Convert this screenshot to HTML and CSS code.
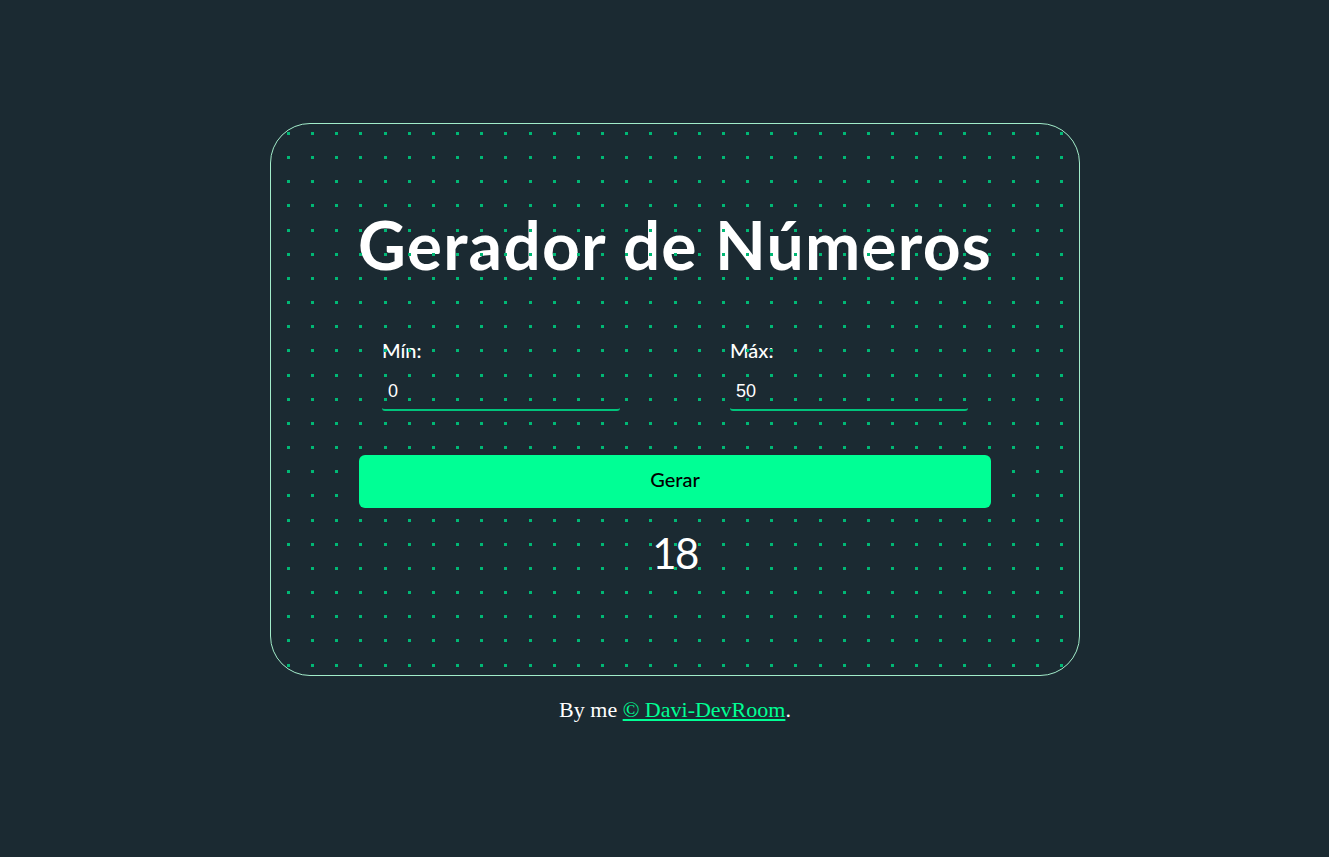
FILE: index.html
```html
<!DOCTYPE html>
<html lang="pt-BR">
<head>
<meta charset="utf-8">
<title>Gerador de Números</title>
<link rel="stylesheet" href="styles.css">
</head>
<body>
<div class="page">
  <main class="card">
    <h1 class="title">Gerador de Números</h1>
    <div class="fields">
      <div class="field">
        <label class="label" for="min">Mín:</label>
        <input class="input" id="min" type="number" value="0">
      </div>
      <div class="field">
        <label class="label" for="max">Máx:</label>
        <input class="input" id="max" type="number" value="50">
      </div>
    </div>
    <button class="btn" type="button">Gerar</button>
    <div class="result">18</div>
    <div class="dots" aria-hidden="true">
      <svg class="dots-svg" width="808" height="551" viewBox="0 0 808 551" shape-rendering="crispEdges">
        <defs>
          <g id="dotrow" fill="#00b875" transform="translate(-1 -1)">
            <rect x="17" width="3" height="3"/><rect x="41" width="3" height="3"/><rect x="65" width="3" height="3"/><rect x="89" width="3" height="3"/><rect x="114" width="3" height="3"/><rect x="138" width="3" height="3"/><rect x="162" width="3" height="3"/><rect x="186" width="3" height="3"/><rect x="210" width="3" height="3"/><rect x="234" width="3" height="3"/><rect x="259" width="3" height="3"/><rect x="283" width="3" height="3"/><rect x="307" width="3" height="3"/><rect x="331" width="3" height="3"/><rect x="355" width="3" height="3"/><rect x="379" width="3" height="3"/><rect x="404" width="3" height="3"/><rect x="428" width="3" height="3"/><rect x="452" width="3" height="3"/><rect x="476" width="3" height="3"/><rect x="500" width="3" height="3"/><rect x="524" width="3" height="3"/><rect x="549" width="3" height="3"/><rect x="573" width="3" height="3"/><rect x="597" width="3" height="3"/><rect x="621" width="3" height="3"/><rect x="645" width="3" height="3"/><rect x="669" width="3" height="3"/><rect x="693" width="3" height="3"/><rect x="718" width="3" height="3"/><rect x="742" width="3" height="3"/><rect x="766" width="3" height="3"/><rect x="790" width="3" height="3"/>
          </g>
        </defs>
        <use href="#dotrow" y="9"/><use href="#dotrow" y="33"/><use href="#dotrow" y="57"/><use href="#dotrow" y="81"/><use href="#dotrow" y="106"/><use href="#dotrow" y="130"/><use href="#dotrow" y="154"/><use href="#dotrow" y="178"/><use href="#dotrow" y="202"/><use href="#dotrow" y="226"/><use href="#dotrow" y="251"/><use href="#dotrow" y="275"/><use href="#dotrow" y="299"/><use href="#dotrow" y="323"/><use href="#dotrow" y="347"/><use href="#dotrow" y="371"/><use href="#dotrow" y="396"/><use href="#dotrow" y="420"/><use href="#dotrow" y="444"/><use href="#dotrow" y="468"/><use href="#dotrow" y="492"/><use href="#dotrow" y="516"/><use href="#dotrow" y="541"/>
      </svg>
    </div>
  </main>
  <p class="footer">By me <a class="footer-link" href="#">© Davi-DevRoom</a>.</p>
</div>
</body>
</html>
```
FILE: styles.css
```css
html, body {
  margin: 0;
  padding: 0;
}
body {
  background: #1b2a32;
  min-height: 100vh;
}
.page {
  display: flex;
  flex-direction: column;
  align-items: center;
  padding: 123px 0 0 21px;
}
.card {
  position: relative;
  box-sizing: border-box;
  width: 810px;
  height: 553px;
  border: 1px solid #a2ecca;
  border-radius: 40px;
  display: flex;
  flex-direction: column;
  align-items: center;
  padding-top: 88px;
  font-family: "Lato", "Open Sans", sans-serif;
  color: #ffffff;
}
.dots {
  position: absolute;
  inset: 0;
  border-radius: 39px;
  overflow: hidden;
  pointer-events: none;
  z-index: 1;
}
.dots-svg {
  display: block;
}
.title {
  margin: 0;
  font-size: 66px;
  line-height: 66px;
  font-weight: 700;
  letter-spacing: 1.2px;
}
.fields {
  display: flex;
  gap: 110px;
  margin-top: 60px;
}
.field {
  width: 238px;
  display: flex;
  flex-direction: column;
}
.label {
  font-size: 20px;
  line-height: 24px;
  font-weight: 500;
}
.input {
  box-sizing: border-box;
  margin-top: 15px;
  width: 238px;
  height: 34px;
  padding: 0 6px 4px;
  background: transparent;
  border: none;
  border-bottom: 2px solid #00c47c;
  border-radius: 3px;
  color: #ffffff;
  font-family: "Liberation Sans", Arial, sans-serif;
  font-size: 18px;
  outline: none;
  -moz-appearance: textfield;
}
.input::-webkit-outer-spin-button,
.input::-webkit-inner-spin-button {
  -webkit-appearance: none;
  margin: 0;
}
.btn {
  position: relative;
  z-index: 2;
  margin-top: 44px;
  width: 632px;
  height: 53px;
  padding: 0 0 6px;
  border: none;
  border-radius: 6px;
  background: #00ff95;
  color: #000000;
  font-family: "Lato", "Open Sans", sans-serif;
  font-size: 20px;
  font-weight: 500;
  cursor: pointer;
}
.result {
  margin-top: 24px;
  font-size: 42px;
  line-height: 42px;
  font-weight: 400;
  letter-spacing: -1.5px;
}
.footer {
  margin: 21px 0 0;
  font-family: "Liberation Serif", "Times New Roman", serif;
  font-size: 22px;
  color: #ffffff;
}
.footer-link {
  color: #00ff95;
}
```
